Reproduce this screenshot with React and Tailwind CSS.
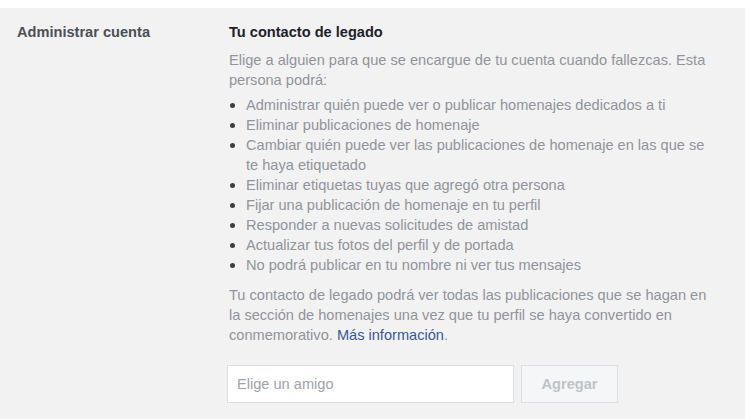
export default function App() {
  const items = [
    "Administrar quién puede ver o publicar homenajes dedicados a ti",
    "Eliminar publicaciones de homenaje",
    "Cambiar quién puede ver las publicaciones de homenaje en las que se te haya etiquetado",
    "Eliminar etiquetas tuyas que agregó otra persona",
    "Fijar una publicación de homenaje en tu perfil",
    "Responder a nuevas solicitudes de amistad",
    "Actualizar tus fotos del perfil y de portada",
    "No podrá publicar en tu nombre ni ver tus mensajes",
  ];
  return (
    <div className="w-[745px] h-[419px] overflow-hidden bg-white font-['Liberation_Sans',Arial,sans-serif] text-[14.6px] leading-5">
      <div className="mt-2 h-[411px] bg-[#f2f2f2] flex pt-[14px]">
        <div className="w-[229px] pl-[17px] font-bold text-[#4b4f56]">Administrar cuenta</div>
        <div className="w-[490px]">
          <div className="font-bold text-[#1d2129]">Tu contacto de legado</div>
          <p className="mt-2 text-[#90949c]">
            Elige a alguien para que se encargue de tu cuenta cuando fallezcas. Esta persona podrá:
          </p>
          <ul className="mt-[5px] text-[#90949c]">
            {items.map((t) => (
              <li key={t} className="flex">
                <span className="w-[17px] shrink-0 flex items-start pt-[8px] pl-[1px]">
                  <span className="block w-[5px] h-[5px] rounded-full bg-[#3a3d42]" />
                </span>
                <span>{t}</span>
              </li>
            ))}
          </ul>
          <p className="mt-[10px] text-[#90949c]">
            Tu contacto de legado podrá ver todas las publicaciones que se hagan en la sección de homenajes una vez que tu perfil se haya convertido en conmemorativo.{" "}
            <a className="text-[#365899]">Más información</a>.
          </p>
          <div className="mt-5 flex gap-[7px] ml-[-2px]">
            <div className="w-[287px] h-[38px] bg-white border border-[#dddfe2] flex items-center pl-[9px] text-[#a0a4aa]">
              Elige un amigo
            </div>
            <div className="w-[97px] h-[38px] bg-[#f5f6f7] border border-[#dddfe2] flex items-center justify-center font-bold text-[#bec3c9]">
              Agregar
            </div>
          </div>
        </div>
      </div>
    </div>
  );
}
